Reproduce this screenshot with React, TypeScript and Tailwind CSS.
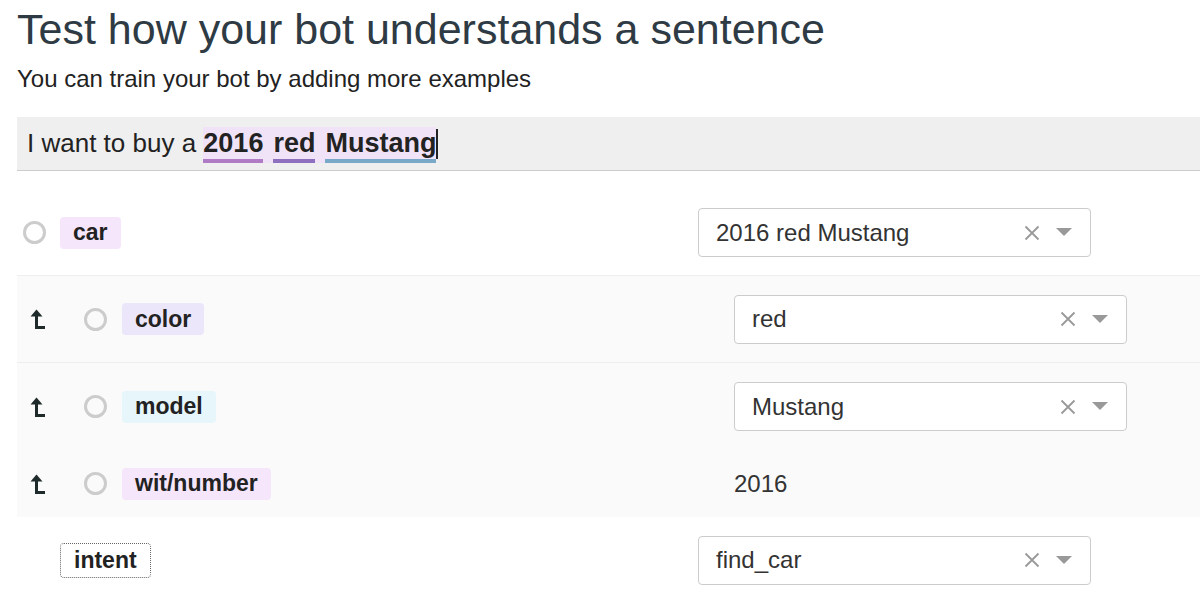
import { ReactNode } from "react";

const font = { fontFamily: '"Liberation Sans", Arial, Helvetica, sans-serif' };

function Radio() {
  return <div className="w-[23px] h-[23px] rounded-full border-[3px] border-[#cccccc] shrink-0" />;
}

function ChildArrow() {
  return (
    <svg width="16" height="20" viewBox="0 0 16 20" className="shrink-0">
      <path d="M6.5 0.5 L0.5 7.5 L12.5 7.5 Z" fill="#1f2a2a" />
      <path d="M6.5 6 V18.5 H15" fill="none" stroke="#1f2a2a" strokeWidth="3" />
    </svg>
  );
}

function Tag({ children, bg }: { children: ReactNode; bg: string }) {
  return (
    <span className={`inline-flex items-center h-[32px] px-[13px] rounded-[4px] text-[23px] font-bold text-[#222] ${bg}`}>
      {children}
    </span>
  );
}

function Select({ value }: { value: string }) {
  return (
    <div className="w-[393px] h-[49px] shrink-0 flex items-center border border-[#cccccc] rounded-[4px] bg-white pl-[17px] pr-[18px]">
      <span className="flex-1 text-[24px] text-[#333]">{value}</span>
      <svg width="16" height="16" viewBox="0 0 16 16" className="mr-[16px]">
        <path d="M1.5 1.5 L14.5 14.5 M14.5 1.5 L1.5 14.5" stroke="#999" strokeWidth="1.8" />
      </svg>
      <svg width="16" height="9" viewBox="0 0 16 9">
        <path d="M0 0 H16 L8 8 Z" fill="#999" />
      </svg>
    </div>
  );
}

function ChildRow({ tag, bg, children, h, border = true }: { tag: string; bg: string; children: ReactNode; h: string; border?: boolean }) {
  return (
    <div className={`flex items-center bg-[#fafafa] ${border ? "border-b border-[#eeeeee]" : ""} ${h}`}>
      <div className="w-[717px] flex items-center pl-[13px] shrink-0">
        <ChildArrow />
        <div className="ml-[38px]">
          <Radio />
        </div>
        <div className="ml-[15px]">
          <Tag bg={bg}>{tag}</Tag>
        </div>
      </div>
      {children}
    </div>
  );
}

export default function App() {
  return (
    <div className="w-[1200px] h-[600px] overflow-hidden bg-white text-[#222]" style={font}>
      <div className="pl-[17px]">
        <h1 className="text-[43px] leading-[56px] text-[#2f3b44] pt-[1px]">
          Test how your bot understands a sentence
        </h1>
        <p className="text-[24px] leading-[32px] mt-[6px] text-[#222]">You can train your bot by adding more examples</p>

        <div className="mt-[22px] h-[54px] bg-[#efefef] border-b border-[#cccccc] flex items-center pl-[10px] text-[26px] text-[#222]">
          <span>I want to buy a&nbsp;</span>
          <span className="bg-[#f0e3f7] flex items-center h-[36px] font-bold text-[27px] mt-[2px]">
            <span className="border-b-[4px] border-[#b07cc6] leading-[32px] pt-[1px]">2016</span>
            <span className="w-[10px]" />
            <span className="border-b-[4px] border-[#8e6fc0] leading-[32px] pt-[1px]">red</span>
            <span className="w-[10px]" />
            <span className="border-b-[4px] border-[#7aa8c8] leading-[32px] pt-[1px]">Mustang</span>
          </span>
          <span className="w-[1.5px] h-[30px] bg-[#222]" />
        </div>

        <div className="mt-[19px]">
          <div className="flex items-center h-[86px] border-b border-[#eeeeee]">
            <div className="w-[681px] flex items-center pl-[6px] shrink-0">
              <Radio />
              <div className="ml-[14px]">
                <Tag bg="bg-[#f5e6fb]">car</Tag>
              </div>
            </div>
            <Select value="2016 red Mustang" />
          </div>

          <ChildRow tag="color" bg="bg-[#ece6fa]" h="h-[87px]">
            <Select value="red" />
          </ChildRow>
          <ChildRow tag="model" bg="bg-[#e6f6fb]" h="h-[87px]" border={false}>
            <Select value="Mustang" />
          </ChildRow>
          <div className="flex items-center bg-[#fafafa] h-[67px]">
            <div className="w-[717px] flex items-center pl-[13px] shrink-0">
              <ChildArrow />
              <div className="ml-[38px]">
                <Radio />
              </div>
              <div className="ml-[15px]">
                <Tag bg="bg-[#f5e6fb]">wit/number</Tag>
              </div>
            </div>
            <span className="text-[24px] text-[#333]">2016</span>
          </div>

          <div className="flex items-center h-[86px]">
            <div className="w-[681px] flex items-center pl-[43px] shrink-0">
              <span className="inline-flex items-center h-[35px] px-[13px] rounded-[4px] border border-dotted border-[#666] text-[23px] font-bold text-[#222]">
                intent
              </span>
            </div>
            <Select value="find_car" />
          </div>
        </div>
      </div>
    </div>
  );
}
